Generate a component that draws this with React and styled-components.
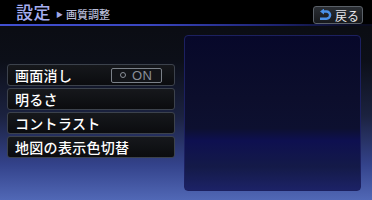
import { createGlobalStyle, styled } from 'styled-components';

const Global = createGlobalStyle`
  html, body { margin: 0; padding: 0; background: #000; }
  body { font-family: "Noto Sans CJK JP", "Noto Sans", sans-serif; }
`;

const Screen = styled.div`
  width: 372px;
  height: 200px;
  overflow: hidden;
  display: flex;
  flex-direction: column;
  background: linear-gradient(180deg, #0a0b10 0%, #0c0f18 30%, #1b2240 58%, #33428a 82%, #5168b6 100%);
`;

const Header = styled.div`
  height: 24px;
  flex: none;
  display: flex;
  align-items: center;
  padding: 0 9px 0 16px;
  background: #000;
  position: relative;
  &::after {
    content: '';
    position: absolute;
    left: 0;
    right: 0;
    bottom: -2px;
    height: 2px;
    background: linear-gradient(90deg, #4250d0 0%, #3a46c0 40%, #1c2270 75%, #0a0c20 95%);
  }
`;

const Title = styled.span`
  font-size: 17px;
  line-height: 20px;
  font-weight: 500;
  color: #a6aef0;
  letter-spacing: 0.5px;
`;

const Arrow = styled.span`
  font-size: 7px;
  color: #a0a8e8;
  margin: 3px 3px 0 5px;
`;

const Sub = styled.span`
  font-size: 11px;
  line-height: 14px;
  margin-top: 3px;
  font-weight: 500;
  color: #b8bcd8;
`;

const BackButton = styled.div`
  margin-left: auto;
  margin-top: 6px;
  width: 50px;
  height: 18px;
  box-sizing: border-box;
  border: 1px solid #5a6068;
  border-radius: 3px;
  background: linear-gradient(180deg, #2a2e34 0%, #16181c 100%);
  display: flex;
  align-items: center;
  gap: 3px;
  padding-left: 4px;
  color: #e8e8ec;
  font-size: 12px;
`;

const Body = styled.div`
  flex: 1;
  display: flex;
  padding: 11px 11px 9px 7px;
  gap: 9px;
`;

const List = styled.div`
  width: 168px;
  padding-top: 29px;
  display: flex;
  flex-direction: column;
  gap: 2px;
`;

const Row = styled.div`
  height: 22px;
  box-sizing: border-box;
  border: 1px solid #3c424c;
  border-radius: 3px;
  background: linear-gradient(180deg, #16181c 0%, #0b0c0f 100%);
  display: flex;
  align-items: center;
  padding: 0 12px 0 7px;
  color: #fff;
  font-size: 14px;
  font-weight: 500;
  letter-spacing: 0.3px;
`;

const Toggle = styled.div`
  margin-left: auto;
  width: 51px;
  height: 15px;
  box-sizing: border-box;
  border: 1px solid #7a8088;
  border-radius: 2px;
  background: #121418;
  display: flex;
  align-items: center;
  padding-left: 8px;
  gap: 6px;
  color: #8a9098;
  font-family: "Liberation Sans", Arial, sans-serif;
  font-size: 13px;
`;

const Dot = styled.span`
  width: 4px;
  height: 4px;
  border: 1px solid #8a9098;
  border-radius: 50%;
`;

const Panel = styled.div`
  width: 177px;
  height: 156px;
  box-sizing: border-box;
  border: 1px solid #1c2060;
  border-radius: 4px;
  background: linear-gradient(180deg, #07082a 0%, #0c0e2c 40%, #0d1030 60%, #0e1050 68%, #141a48 85%, #1c2266 100%);
`;

const items = ['画面消し', '明るさ', 'コントラスト', '地図の表示色切替'];

export default function App() {
  return (
    <Screen>
      <Global />
      <Header>
        <Title>設定</Title>
        <Arrow>▶</Arrow>
        <Sub>画質調整</Sub>
        <BackButton>
          <svg width="14" height="12" viewBox="0 0 14 12">
            <path d="M4.5 2.5 H8.5 A3.6 3.6 0 0 1 8.5 9.7 H2" fill="none" stroke="#4a90e8" strokeWidth="2.4" />
            <path d="M6 -0.5 L2 2.5 L6 5.5 Z" fill="#4a90e8" />
          </svg>
          <span>戻る</span>
        </BackButton>
      </Header>
      <Body>
        <List>
          {items.map((label, i) => (
            <Row key={label}>
              {label}
              {i === 0 && (
                <Toggle>
                  <Dot />
                  ON
                </Toggle>
              )}
            </Row>
          ))}
        </List>
        <Panel />
      </Body>
    </Screen>
  );
}
